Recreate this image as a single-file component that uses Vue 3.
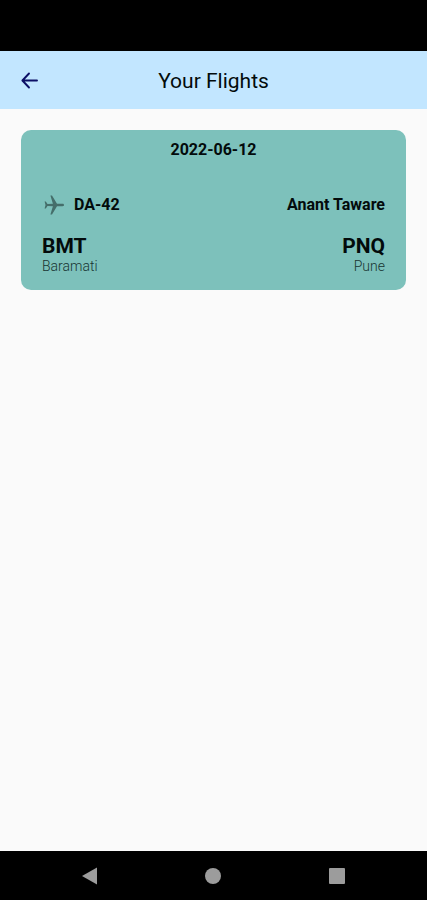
<script setup>
import { ref } from 'vue'

const flights = ref([
  {
    id: 1,
    date: '2022-06-12',
    aircraft: 'DA-42',
    pilot: 'Anant Taware',
    from: { code: 'BMT', city: 'Baramati' },
    to: { code: 'PNQ', city: 'Pune' },
  },
])
</script>

<template>
  <div class="screen">
    <div class="status-bar"></div>

    <header class="app-bar">
      <button class="back" type="button" aria-label="Back">
        <svg viewBox="0 0 24 24" width="24" height="24" aria-hidden="true">
          <path
            d="M19 12.500H5M11 5.500L4.400 12.500L11 19.500"
            fill="none"
            stroke="currentColor"
            stroke-width="1.900"
            stroke-linecap="round"
            stroke-linejoin="round"
          />
        </svg>
      </button>
      <h1 class="title">Your Flights</h1>
    </header>

    <main class="content">
      <article v-for="flight in flights" :key="flight.id" class="card">
        <time class="date" :datetime="flight.date">{{ flight.date }}</time>
        <div class="row details">
          <span class="aircraft">
            <svg class="plane" viewBox="0 0 24 24" width="24" height="24" aria-hidden="true">
              <path
                d="M22 12c0 .8-.6 1.200-1.400 1.200H15L10 21.600H8.400L10.900 13.200L5.500 13L3.800 15.400H2.600L3.500 12L2.600 8.600H3.800L5.500 11L10.900 10.800L8.400 2.400H10L15 10.800H20.600C21.400 10.800 22 11.200 22 12Z"
              />
            </svg>
            {{ flight.aircraft }}
          </span>
          <span>{{ flight.pilot }}</span>
        </div>
        <div class="row">
          <div class="place">
            <span class="code">{{ flight.from.code }}</span>
            <span class="city">{{ flight.from.city }}</span>
          </div>
          <div class="place end">
            <span class="code">{{ flight.to.code }}</span>
            <span class="city">{{ flight.to.city }}</span>
          </div>
        </div>
      </article>
    </main>

    <nav class="nav-bar" aria-label="System navigation">
      <button type="button" aria-label="Back">
        <svg viewBox="0 0 20 20" width="20" height="20" aria-hidden="true">
          <path d="M2 10L17 1.500V18.500Z" />
        </svg>
      </button>
      <button type="button" aria-label="Home">
        <svg viewBox="0 0 20 20" width="20" height="20" aria-hidden="true">
          <circle cx="10" cy="10" r="8" />
        </svg>
      </button>
      <button type="button" aria-label="Recent apps">
        <svg viewBox="0 0 20 20" width="20" height="20" aria-hidden="true">
          <rect x="2" y="2" width="16" height="16" rx="1" />
        </svg>
      </button>
    </nav>
  </div>
</template>

<style>
body {
  margin: 0;
  background: #fafafa;
}
</style>

<style scoped>
.screen {
  display: flex;
  flex-direction: column;
  min-height: 100vh;
  background: #fafafa;
  color: #030b0b;
  font-family: Roboto, "Liberation Sans", sans-serif;
}

button {
  display: grid;
  place-items: center;
  padding: 0;
  border: 0;
  background: none;
  cursor: pointer;
}

svg {
  display: block;
}

.status-bar {
  height: 51px;
  background: #000;
}

.app-bar {
  display: grid;
  grid-template-columns: 60px 1fr 60px;
  align-items: center;
  height: 58px;
  background: #c2e6ff;
}

.back {
  height: 48px;
  color: #0c0f66;
}

.title {
  margin: 0;
  padding-top: 2px;
  font-size: 21px;
  font-weight: 400;
  line-height: 24px;
  text-align: center;
}

.content {
  flex: 1;
  padding: 21px;
}

.card {
  display: flex;
  flex-direction: column;
  padding: 10px 21px 16px;
  border-radius: 10px;
  background: #7dc1bb;
}

.date,
.details {
  font-size: 16px;
  font-weight: 700;
  line-height: 20px;
}

.date {
  text-align: center;
}

.row {
  display: flex;
  justify-content: space-between;
}

.details {
  align-items: center;
  margin: 33px 0 18px;
}

.aircraft {
  display: flex;
  align-items: center;
  gap: 8px;
}

.plane {
  fill: #456e6a;
}

.place {
  display: flex;
  flex-direction: column;
}

.end {
  text-align: right;
}

.code {
  font-size: 21px;
  font-weight: 700;
  line-height: 23px;
}

.city {
  color: #183532;
  font-size: 14px;
  font-weight: 300;
  line-height: 16px;
}

.nav-bar {
  display: grid;
  grid-template-columns: repeat(3, 1fr);
  height: 49px;
  padding: 0 28px;
  background: #000;
}

.nav-bar svg {
  fill: #9c9c9c;
}
</style>
